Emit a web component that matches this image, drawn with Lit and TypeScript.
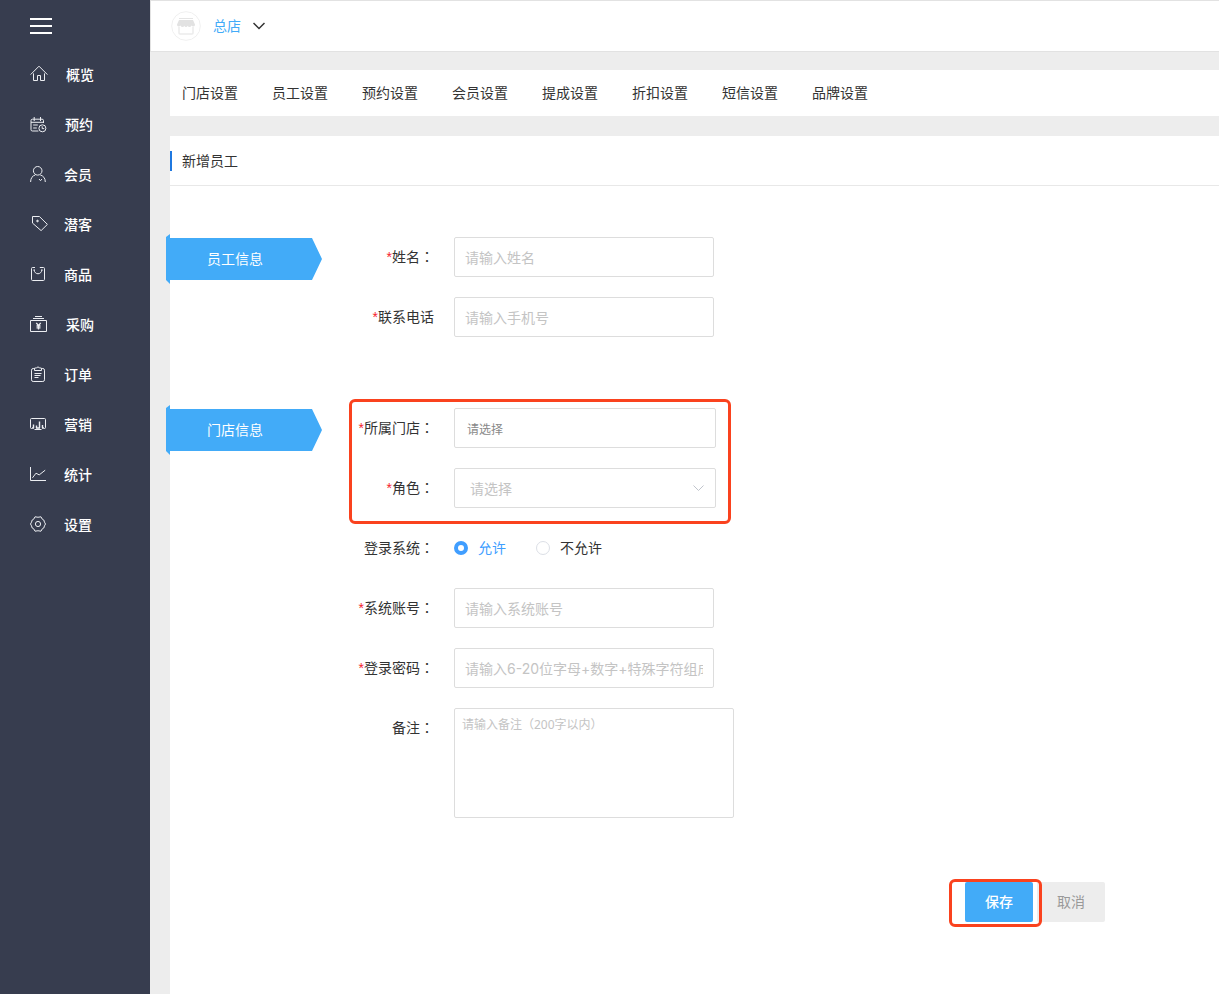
import { LitElement, html, css, svg, nothing } from "lit";
import type { TemplateResult } from "lit";
import { customElement, property, state } from "lit/decorators.js";
import { classMap } from "lit/directives/class-map.js";

interface NavItem {
  label: string;
  size: number;
  icon: TemplateResult;
}

const NAV: NavItem[] = [
  {
    label: "概览",
    size: 18,
    icon: svg`<path d="M0.6 9.6 9 1.2l8.4 8.4M3.500 8.4v7.1h4v-5h3v5h4V8.4"/>`,
  },
  {
    label: "预约",
    size: 17,
    icon: svg`<path d="M8.4 15H2.4Q1 15 1 13.6V4.6Q1 3.2 2.4 3.2h9.7Q13.500 3.2 13.500 4.6V7M1 6.3h12.500M4.2 1v4M10.5 1v4M3.2 9h4.6M3.2 12h3.6"/><circle cx="12.4" cy="12.300" r="3.5"/><path d="M12.2 10.300v2.3h2"/>`,
  },
  {
    label: "会员",
    size: 16,
    icon: svg`<circle cx="7.7" cy="4.800" r="4.3"/><path d="M0.6 16c0-4 2-6.2 4.6-7M10.3 9c2.9.8 5 3 5 7M9 13l1.500 1.700 1.500-1.700"/>`,
  },
  {
    label: "潜客",
    size: 16,
    icon: svg`<path d="M2.5 .5h6.9l8 7.900-6.300 6.200L2.5 7.1z"/><circle cx="7.500" cy="5" r=".8" fill="currentColor"/>`,
  },
  {
    label: "商品",
    size: 16,
    icon: svg`<path d="M5 1.500H2.6Q1.5 1.5 1.5 2.6v10.8q0 1.1 1.1 1.1h10.8q1.1 0 1.1-1.1V2.6q0-1.100-1.100-1.100H9.800M4 3.800c.8 5.300 7.200 5.300 8 0M3.500 4h1.500M11 4h1.500"/>`,
  },
  {
    label: "采购",
    size: 18,
    icon: svg`<path d="M.5 5.500h16v11H.5zM3 3.500h11M5 1.500h7"/><path stroke-width="1.300" d="M6.300 7.800l2.200 2.800 2.200-2.800M8.500 10.600v4M6.500 11h4M6.500 12.800h4"/>`,
  },
  {
    label: "订单",
    size: 16,
    icon: svg`<path d="M4.500 2.500H3.200Q1.500 2.500 1.500 4.200v9.600q0 1.700 1.700 1.700h9.600q1.700 0 1.700-1.700V4.200q0-1.700-1.700-1.700h-1.300M4.500 4.500V2.200l2-.4Q8 0 9.500 1.800l2 .4v2.300zM4.500 7.500h7M4.500 9.500h6M4.500 11.500h4"/>`,
  },
  {
    label: "营销",
    size: 16,
    icon: svg`<path d="M2 12.500H1.500q-1 0-1-1v-8q0-1 1-1h13q1 0 1 1v8q0 1-1 1H14M4.500 13.500h7M8 12.500v1"/><path stroke-width="1.400" d="M3.500 8.500v3.500M6.500 9.500v2.500M9.500 5.500V12M12.500 9v3M2 12h2M6 12h4M12 12h2"/>`,
  },
  {
    label: "统计",
    size: 16,
    icon: svg`<path d="M.5 1v13.500h15.500M2.500 11.800 6 7.200l3.200 1.700 6-4.700"/>`,
  },
  {
    label: "设置",
    size: 16,
    icon: svg`<path d="M5 .8q3 .9 6 0l1.300 2.400 1.500.8q.5 2.300 1.700 4-1.200 1.700-1.700 4l-1.500.8L11 15.200q-3-.9-6 0l-1.300-2.400-1.500-.8Q1.700 9.700.5 8q1.200-1.700 1.700-4l1.500-.8z"/><circle cx="8" cy="8" r="2.600"/>`,
  },
];

const TABS = ["门店设置", "员工设置", "预约设置", "会员设置", "提成设置", "折扣设置", "短信设置", "品牌设置"];

@customElement("side-nav")
export class SideNav extends LitElement {
  static styles = css`
    :host {
      display: block;
      flex: none;
      width: 150px;
      background: #373d4f;
      color: #fff;
    }
    .toggle {
      display: flex;
      align-items: center;
      height: 50px;
      padding: 2px 30px 0;
      border: 0;
      background: none;
      color: inherit;
    }
    ul {
      margin: 0;
      padding: 0;
      list-style: none;
    }
    a {
      display: flex;
      align-items: center;
      gap: 18px;
      height: 50px;
      padding-left: 30px;
      color: inherit;
      font-weight: 500;
      text-decoration: none;
    }
    .icon {
      display: block;
      flex: none;
      margin-bottom: 2px;
      fill: none;
      stroke: currentColor;
      color: #eceef2;
      overflow: visible;
    }
  `;

  render() {
    return html`
      <button class="toggle" aria-label="菜单">
        <svg width="22" height="16" viewBox="0 0 22 16"><path d="M0 1h22M0 8h22M0 15h22" stroke="#fff" stroke-width="2" /></svg>
      </button>
      <nav>
        <ul>
          ${NAV.map(
            (n) => html`<li>
              <a href="#">
                <svg class="icon" width=${n.size} height=${n.size} viewBox="0 0 ${n.size} ${n.size}">${n.icon}</svg>
                <span>${n.label}</span>
              </a>
            </li>`
          )}
        </ul>
      </nav>
    `;
  }
}

@customElement("form-row")
export class FormRow extends LitElement {
  @property() label = "";
  @property({ type: Boolean }) required = false;
  @property({ type: Boolean }) plain = false;
  @property() kind = "text";
  @property() placeholder = "";
  @state() private choice = "yes";

  static styles = css`
    :host {
      display: flex;
      gap: 20px;
    }
    .label {
      flex: none;
      width: 90px;
      height: 40px;
      line-height: 40px;
      text-align: right;
      white-space: nowrap;
      color: #333;
    }
    .star {
      color: #f5222d;
      font-family: "Liberation Sans", sans-serif;
    }
    .colon {
      font-family: "Noto Sans CJK TC", sans-serif;
      line-height: 1;
    }
    .control {
      box-sizing: border-box;
      display: block;
      width: 260px;
      height: 40px;
      margin: 0;
      padding: 0 10px;
      border: 1px solid #ddd;
      border-radius: 2px;
      background: #fff;
      color: #333;
      font: 14px Inter, "Noto Sans CJK SC", sans-serif;
      outline: none;
    }
    .control::placeholder {
      color: #c4c4c4;
      opacity: 1;
    }
    .picker {
      width: 262px;
      padding: 2px 12px 0;
      font-size: 12px;
    }
    .picker::placeholder {
      color: #888;
    }
    .select {
      position: relative;
    }
    .select .control {
      width: 262px;
      padding: 0 32px 0 15px;
      appearance: none;
      color: #c4c4c4;
    }
    .arrow {
      position: absolute;
      right: 11px;
      top: 16px;
      pointer-events: none;
    }
    .note {
      width: 280px;
      height: 110px;
      padding: 7px;
      font: 12px/18px "Noto Sans", "Noto Sans CJK SC", sans-serif;
      resize: none;
    }
    .radios {
      display: flex;
      align-items: center;
      gap: 30px;
      height: 40px;
    }
    .radio {
      display: flex;
      align-items: center;
      gap: 10px;
      color: #333;
    }
    .radio.on {
      color: #409eff;
    }
    .radio input {
      box-sizing: border-box;
      width: 14px;
      height: 14px;
      margin: 0;
      appearance: none;
      border: 1px solid #dcdfe6;
      border-radius: 50%;
      background: #fff;
    }
    .radio input:checked {
      border: 4px solid #409eff;
    }
  `;

  private option(value: string, text: string) {
    const on = this.choice === value;
    return html`<label class=${classMap({ radio: true, on })}>
      <input type="radio" name="login" value=${value} .checked=${on} @change=${() => (this.choice = value)} />${text}
    </label>`;
  }

  private field() {
    switch (this.kind) {
      case "radio":
        return html`<div class="radios" id="field" role="radiogroup" aria-labelledby="label">
          ${this.option("yes", "允许")}${this.option("no", "不允许")}
        </div>`;
      case "select":
        return html`<div class="select">
          <select class="control" id="field"><option>${this.placeholder}</option></select>
          <svg class="arrow" width="13" height="8" viewBox="0 0 13 8">
            <path d="M1.500 1.500l5 5 5-5" fill="none" stroke="#c0c4cc" />
          </svg>
        </div>`;
      case "note":
        return html`<textarea class="control note" id="field" placeholder=${this.placeholder}></textarea>`;
      case "picker":
        return html`<input class="control picker" id="field" placeholder=${this.placeholder} />`;
      default:
        return html`<input class="control" id="field" type=${this.kind} placeholder=${this.placeholder} />`;
    }
  }

  render() {
    return html`
      <label class="label" id="label" for="field"
        >${this.required ? html`<span class="star">*</span>` : nothing}${this.label}${this.plain
          ? nothing
          : html`<span class="colon">：</span>`}</label
      >
      ${this.field()}
    `;
  }
}

@customElement("app-root")
export class AppRoot extends LitElement {
  static styles = css`
    :host {
      display: flex;
      min-height: 100vh;
      overflow: hidden;
      background: #ededed;
      color: #333;
      font: 14px/20px "Noto Sans", "Noto Sans CJK SC", sans-serif;
    }
    .main {
      display: flex;
      flex: 1;
      flex-direction: column;
      min-width: 0;
    }
    .top {
      display: flex;
      align-items: center;
      height: 50px;
      padding-left: 20px;
      border: 1px solid #e2e2e2;
      border-right: 0;
      background: #fff;
    }
    .store {
      display: flex;
      align-items: center;
      gap: 12px;
      padding: 0;
      border: 0;
      background: none;
      color: #42abf8;
      font: inherit;
    }
    .tabs {
      display: flex;
      gap: 34px;
      margin: 18px 0 20px 20px;
      padding: 13px 12px;
      background: #fff;
    }
    .tabs a {
      color: inherit;
      text-decoration: none;
      white-space: nowrap;
    }
    .panel {
      flex: 1;
      margin-left: 20px;
      background: #fff;
    }
    .head {
      padding: 15px 0 14px;
      border-bottom: 1px solid #e8e8e8;
    }
    h1 {
      margin: 0;
      padding-left: 10px;
      border-left: 2px solid #1f78e0;
      font-size: 14px;
      font-weight: 400;
      line-height: 20px;
    }
    .section {
      display: flex;
      align-items: flex-start;
      gap: 22px;
      margin: 51px 0 0 -4px;
    }
    .section + .section {
      margin-top: 71px;
    }
    h2 {
      flex: none;
      box-sizing: border-box;
      width: 156px;
      height: 50px;
      margin: -3px 0 0;
      padding-right: 18px;
      background: #42abf8;
      clip-path: polygon(0 3px, 4px 0, 4px 4px, 146px 4px, 156px 25px, 146px 46px, 4px 46px, 4px 50px, 0 46px);
      color: #fff;
      font-size: 14px;
      font-weight: 400;
      line-height: 50px;
      text-align: center;
    }
    .fields,
    .marked {
      display: grid;
      justify-items: start;
      gap: 20px;
    }
    .marked {
      position: relative;
    }
    .marked::after {
      content: "";
      position: absolute;
      border: 3px solid #fa421e;
      border-radius: 6px;
      pointer-events: none;
    }
    .choices::after {
      inset: -9px -15px -16px 5px;
    }
    .actions {
      display: flex;
      justify-content: flex-end;
      gap: 4px;
      margin-top: 64px;
      padding-right: 114px;
    }
    .submit::after {
      inset: -3px -9px -5px -16px;
    }
    .button {
      width: 68px;
      height: 40px;
      padding: 0;
      border: 0;
      border-radius: 2px;
      background: #ededed;
      color: #999;
      font: inherit;
    }
    .primary {
      background: #42abf8;
      color: #fff;
      font-weight: 500;
    }
  `;

  render() {
    return html`
      <side-nav></side-nav>
      <div class="main">
        <header class="top">
          <button class="store">
            <svg width="30" height="30" viewBox="0 0 30 30">
              <circle cx="15" cy="15" r="14.300" fill="#fff" stroke="#f0f0f0" />
              <path d="M8 7.500h14" stroke="#e4e4e4" />
              <path d="M8 9h14l2 4.500q0 2-1.500 2t-2-1q-.7 1.500-2 1.500t-1.800-1.300q-.5 1.300-1.700 1.300t-1.700-1.300q-.5 1.300-1.800 1.300t-2-1.500q-.5 1-2 1T6 13.500z" fill="#e2e2e2" />
              <path d="M8 16v6q0 1 1 1h12q1 0 1-1v-6" fill="none" stroke="#ebebeb" stroke-width="1.500" />
            </svg>
            <span>总店</span>
            <svg width="12" height="8" viewBox="0 0 12 8"><path d="M.5 1 6 6.500 11.500 1" fill="none" stroke="#333" stroke-width="1.500" /></svg>
          </button>
        </header>
        <nav class="tabs">${TABS.map((t) => html`<a href="#">${t}</a>`)}</nav>
        <main class="panel">
          <div class="head"><h1>新增员工</h1></div>
          <section class="section">
            <h2>员工信息</h2>
            <div class="fields">
              <form-row label="姓名" required placeholder="请输入姓名"></form-row>
              <form-row label="联系电话" required plain placeholder="请输入手机号"></form-row>
            </div>
          </section>
          <section class="section">
            <h2>门店信息</h2>
            <div class="fields">
              <div class="marked choices">
                <form-row label="所属门店" required kind="picker" placeholder="请选择"></form-row>
                <form-row label="角色" required kind="select" placeholder="请选择"></form-row>
              </div>
              <form-row label="登录系统" kind="radio"></form-row>
              <form-row label="系统账号" required placeholder="请输入系统账号"></form-row>
              <form-row label="登录密码" required kind="password" placeholder="请输入6-20位字母+数字+特殊字符组成"></form-row>
              <form-row label="备注" kind="note" placeholder="请输入备注（200字以内）"></form-row>
            </div>
          </section>
          <div class="actions">
            <div class="marked submit"><button class="button primary">保存</button></div>
            <button class="button">取消</button>
          </div>
        </main>
      </div>
    `;
  }
}
